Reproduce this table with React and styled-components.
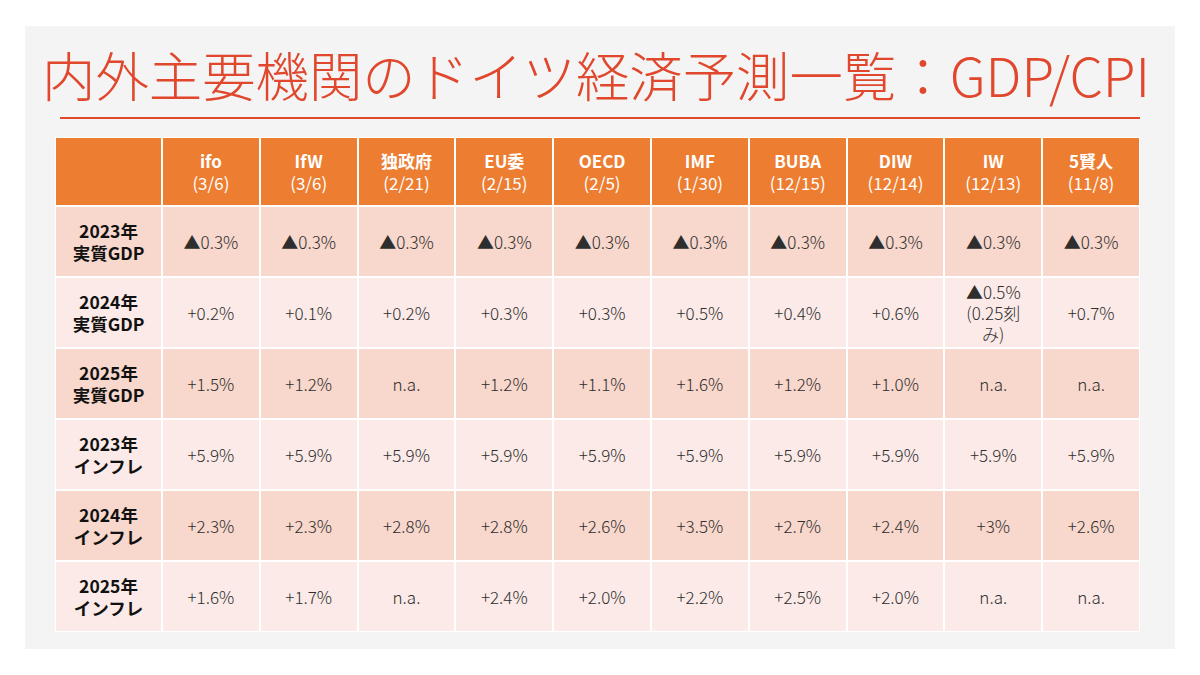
import React from 'react';
import styled, { createGlobalStyle } from 'styled-components';

const GlobalStyle = createGlobalStyle`
  html, body {
    margin: 0;
    padding: 0;
    background: #ffffff;
  }
  body {
    font-family: "Noto Sans CJK JP", "Noto Sans", sans-serif;
  }
`;

const Slide = styled.div`
  width: 1150px;
  height: 623px;
  margin: 26px 0 0 25px;
  background: #f4f4f4;
  display: flex;
  flex-direction: column;
  box-sizing: border-box;
  padding-top: 16px;
`;

const Title = styled.h1`
  margin: 0 0 0 17px;
  font-family: "Noto Sans CJK JP", sans-serif;
  font-weight: 300;
  font-size: 53.4px;
  line-height: 64px;
  color: #e0472d;
  white-space: nowrap;
`;

const Rule = styled.hr`
  margin: 11px 0 0 35px;
  width: 1080px;
  height: 2px;
  border: none;
  background: #e0472d;
`;

const Table = styled.div`
  margin: 18px 0 0 30px;
  width: 1085px;
  box-sizing: border-box;
  background: #ffffff;
  padding: 1px;
  display: grid;
  grid-template-columns: 105px repeat(10, 1fr);
  grid-template-rows: 67px repeat(6, 69px);
  gap: 2px;
`;

const Cell = styled.div`
  display: flex;
  flex-direction: column;
  align-items: center;
  justify-content: center;
  text-align: center;
  background: ${(p) => (p.$head ? '#ed7d31' : p.$band ? '#f8d7cc' : '#fbeae7')};
  color: ${(p) => (p.$head ? '#ffffff' : '#333333')};
`;

const HeadName = styled.div`
  font-weight: 700;
  font-size: 17px;
  line-height: 22px;
`;

const HeadDate = styled.div`
  font-weight: 400;
  font-size: 17px;
  line-height: 22px;
`;

const RowLabel = styled.div`
  font-weight: 700;
  font-size: 17.5px;
  line-height: 22px;
  color: #111111;
`;

const Value = styled.div`
  font-weight: 300;
  font-size: 17px;
  line-height: 21px;
  color: #2e2e2e;
`;

const heads = [
  ['ifo', '(3/6)'],
  ['IfW', '(3/6)'],
  ['独政府', '(2/21)'],
  ['EU委', '(2/15)'],
  ['OECD', '(2/5)'],
  ['IMF', '(1/30)'],
  ['BUBA', '(12/15)'],
  ['DIW', '(12/14)'],
  ['IW', '(12/13)'],
  ['5賢人', '(11/8)'],
];

const rows = [
  ['2023年', '実質GDP', ['▲0.3%', '▲0.3%', '▲0.3%', '▲0.3%', '▲0.3%', '▲0.3%', '▲0.3%', '▲0.3%', '▲0.3%', '▲0.3%']],
  ['2024年', '実質GDP', ['+0.2%', '+0.1%', '+0.2%', '+0.3%', '+0.3%', '+0.5%', '+0.4%', '+0.6%', '▲0.5%\n(0.25刻\nみ)', '+0.7%']],
  ['2025年', '実質GDP', ['+1.5%', '+1.2%', 'n.a.', '+1.2%', '+1.1%', '+1.6%', '+1.2%', '+1.0%', 'n.a.', 'n.a.']],
  ['2023年', 'インフレ', ['+5.9%', '+5.9%', '+5.9%', '+5.9%', '+5.9%', '+5.9%', '+5.9%', '+5.9%', '+5.9%', '+5.9%']],
  ['2024年', 'インフレ', ['+2.3%', '+2.3%', '+2.8%', '+2.8%', '+2.6%', '+3.5%', '+2.7%', '+2.4%', '+3%', '+2.6%']],
  ['2025年', 'インフレ', ['+1.6%', '+1.7%', 'n.a.', '+2.4%', '+2.0%', '+2.2%', '+2.5%', '+2.0%', 'n.a.', 'n.a.']],
];

const App = () => (
  <>
    <GlobalStyle />
    <Slide>
      <Title>内外主要機関のドイツ経済予測一覧：GDP/CPI</Title>
      <Rule />
      <Table>
        <Cell $head />
        {heads.map(([name, date]) => (
          <Cell $head key={name}>
            <HeadName>{name}</HeadName>
            <HeadDate>{date}</HeadDate>
          </Cell>
        ))}
        {rows.map(([year, kind, values], i) => (
          <React.Fragment key={year + kind}>
            <Cell $band={i % 2 === 0}>
              <RowLabel>{year}</RowLabel>
              <RowLabel>{kind}</RowLabel>
            </Cell>
            {values.map((v, j) => (
              <Cell $band={i % 2 === 0} key={j}>
                {v.split('\n').map((line) => (
                  <Value key={line}>{line}</Value>
                ))}
              </Cell>
            ))}
          </React.Fragment>
        ))}
      </Table>
    </Slide>
  </>
);

export default App;
